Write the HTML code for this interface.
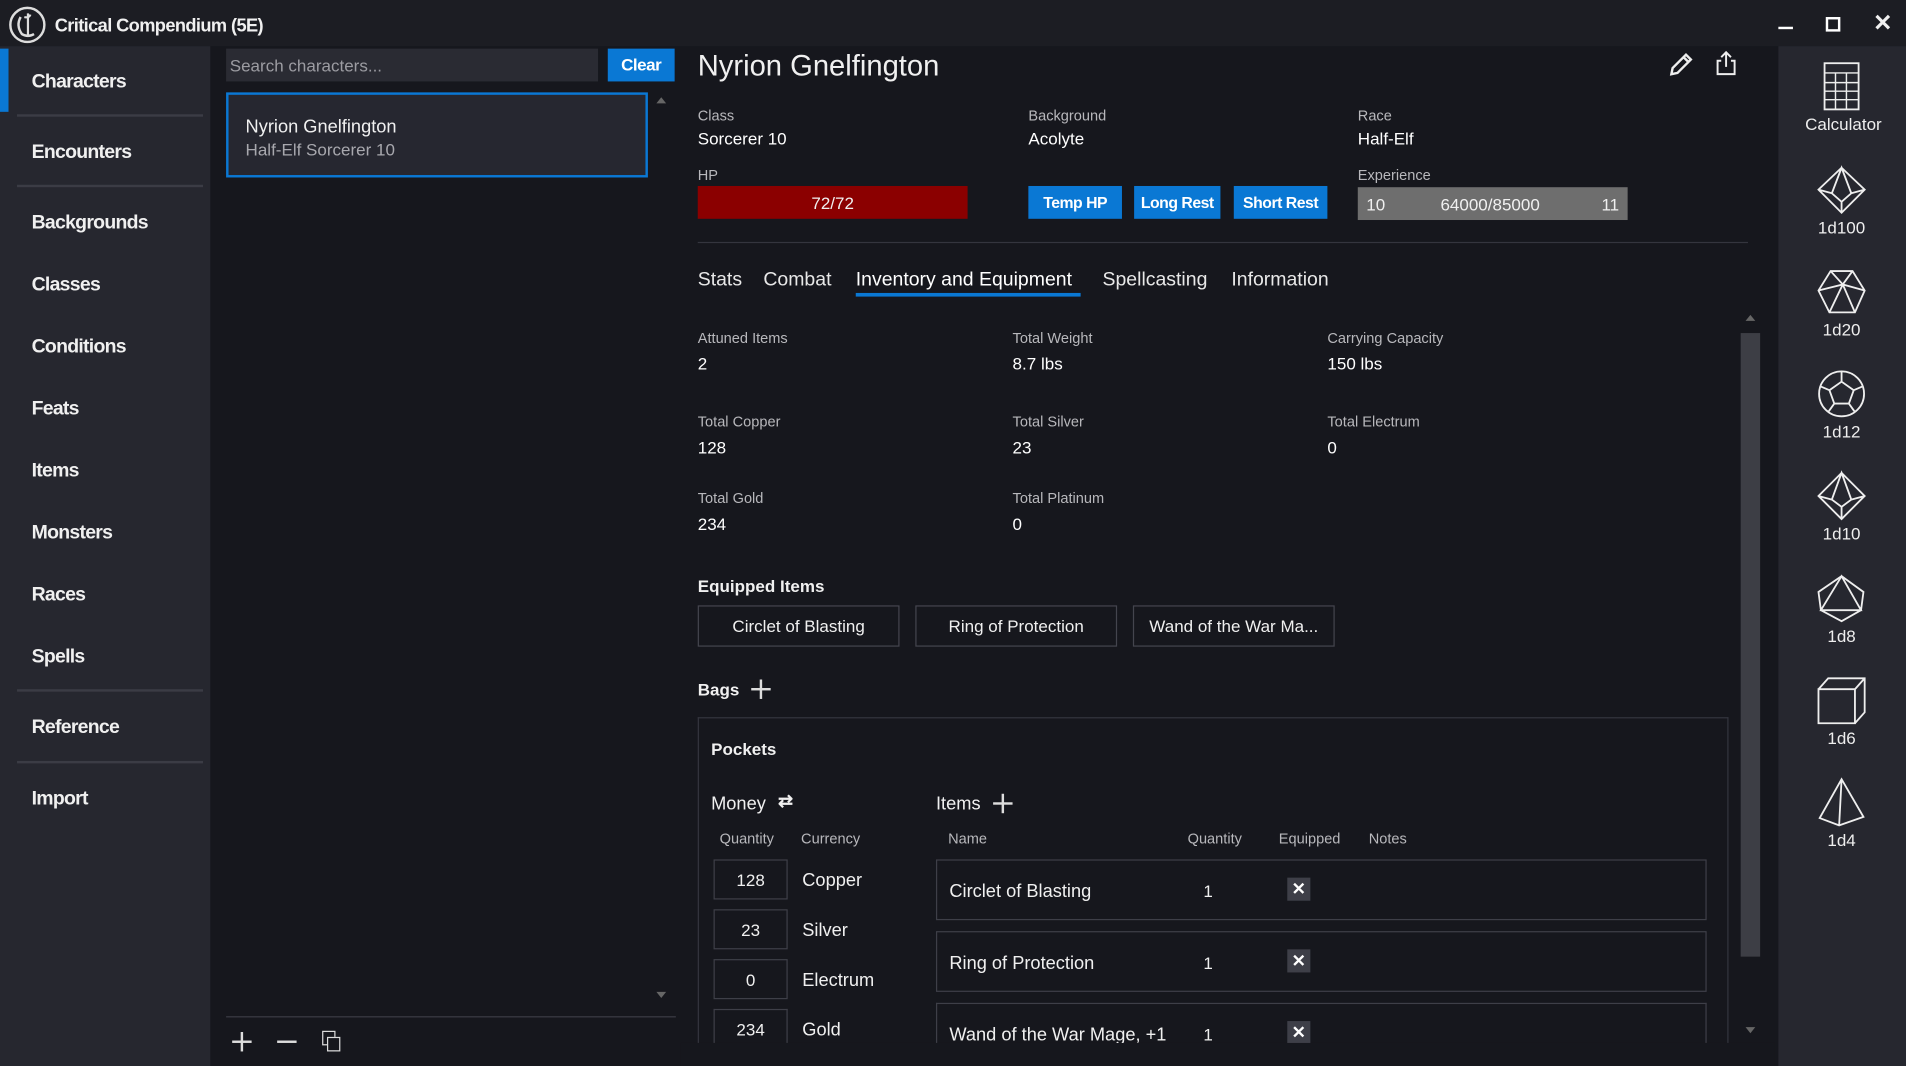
<!DOCTYPE html>
<html><head><meta charset="utf-8">
<style>
*{margin:0;padding:0;box-sizing:border-box}
html,body{width:1906px;height:1066px;overflow:hidden;background:#16171d}
#w{position:absolute;left:0;top:0;width:1568px;height:877px;transform:scale(1.21556);transform-origin:0 0;background:#16171d;font-family:"Liberation Sans",sans-serif;color:#f0f0f0;font-size:14px}
.a{position:absolute;white-space:nowrap}
.nav{left:26px;font-size:16px;font-weight:bold;letter-spacing:-0.6px;margin-top:1px}
.sep{position:absolute;left:14px;width:153px;height:2px;background:#3b3c45}
.lbl{font-size:12px;color:#b8b8bc}
.val{font-size:14px;color:#fff}
.btn{position:absolute;background:#0a78d4;color:#fff;font-weight:bold;font-size:13px;text-align:center;line-height:27px;height:27px;letter-spacing:-0.4px}
.tab{font-size:16px;color:#e8e8e8;top:222px}
.eq{position:absolute;top:498px;height:34px;border:1px solid #44454e;font-size:14px;text-align:center;line-height:33px;width:166px}
.qb{position:absolute;left:587px;width:61px;height:33px;border:1px solid #3e3f48;text-align:center;line-height:32px;font-size:14px}
.cur{left:660px;font-size:15px}
.row{position:absolute;left:770px;width:634px;height:50px;border:1px solid #3e3f48}
.row .n{position:absolute;left:10px;top:17px;font-size:15px}
.row .q{position:absolute;left:219px;top:17px;font-size:14px}
.row .x{position:absolute;left:288px;top:14px;width:19px;height:19px;background:#3e3f48;color:#fff;font-size:14px;font-weight:bold;text-align:center;line-height:19px}
.die{position:absolute;left:1485px;width:60px;text-align:center;font-size:14px;color:#eee}
.die svg{display:block;margin:0 auto 2px}
</style></head><body><div id="w">
<div class="a" style="left:0;top:0;width:1568px;height:38px;background:#1c1d23"></div>
<svg class="a" style="left:7px;top:5px" width="31" height="31" viewBox="0 0 31 31"><circle cx="15.5" cy="15.5" r="14" fill="none" stroke="#ddd" stroke-width="2"/><path d="M10 9 Q6 16 11 23 Q16 26 21 23" fill="none" stroke="#ddd" stroke-width="2"/><path d="M16 6 L16 24 M13 9 Q17 10 18 7" fill="none" stroke="#ddd" stroke-width="1.8"/></svg>
<div class="a" style="left:45px;top:13px;font-size:15px;font-weight:bold;letter-spacing:-0.5px">Critical Compendium (5E)</div>
<div class="a" style="left:1463px;top:22px;width:12px;height:2px;background:#fff"></div>
<div class="a" style="left:1502px;top:14px;width:12px;height:12px;border:2px solid #fff"></div>
<div class="a" style="left:1541px;top:8px;font-size:19px;font-weight:bold">✕</div>
<div class="a" style="left:0;top:38px;width:173px;height:839px;background:#26272f"></div>
<div class="a" style="left:0;top:40px;width:7px;height:52px;background:#0a78d4"></div>
<div class="a nav" style="top:58px">Characters</div>
<div class="sep" style="top:94px"></div>
<div class="a nav" style="top:116px">Encounters</div>
<div class="sep" style="top:152px"></div>
<div class="a nav" style="top:174px">Backgrounds</div>
<div class="a nav" style="top:225px">Classes</div>
<div class="a nav" style="top:276px">Conditions</div>
<div class="a nav" style="top:327px">Feats</div>
<div class="a nav" style="top:378px">Items</div>
<div class="a nav" style="top:429px">Monsters</div>
<div class="a nav" style="top:480px">Races</div>
<div class="a nav" style="top:531px">Spells</div>
<div class="sep" style="top:567px"></div>
<div class="a nav" style="top:589px">Reference</div>
<div class="sep" style="top:626px"></div>
<div class="a nav" style="top:648px">Import</div>
<div class="a" style="left:186px;top:40px;width:306px;height:27px;background:#2a2b33;color:#9c9ca2;font-size:14px;padding:6px 3px">Search characters...</div>
<div class="btn" style="left:500px;top:40px;width:55px;font-size:14px">Clear</div>
<div class="a" style="left:186px;top:76px;width:347px;height:70px;background:#262730;border:2px solid #0a78d4"></div>
<div class="a" style="left:202px;top:96px;font-size:15px">Nyrion Gnelfington</div>
<div class="a" style="left:202px;top:115px;font-size:14px;color:#a8a8ae">Half-Elf Sorcerer 10</div>
<div class="a" style="left:540px;top:80px;width:0;height:0;border-left:4px solid transparent;border-right:4px solid transparent;border-bottom:5px solid #666"></div>
<div class="a" style="left:540px;top:816px;width:0;height:0;border-left:4px solid transparent;border-right:4px solid transparent;border-top:5px solid #666"></div>
<div class="a" style="left:186px;top:836px;width:370px;height:1px;background:#3b3c45"></div>
<div class="a" style="left:191px;top:856px;width:16px;height:2px;background:#ddd"></div>
<div class="a" style="left:198px;top:849px;width:2px;height:16px;background:#ddd"></div>
<div class="a" style="left:228px;top:856px;width:16px;height:2px;background:#ddd"></div>
<div class="a" style="left:265px;top:848px;width:11px;height:12px;border:1.5px solid #ddd"></div>
<div class="a" style="left:269px;top:853px;width:11px;height:12px;border:1.5px solid #ddd;background:#16171d"></div>
<div class="a" style="left:574px;top:41px;font-size:24px;letter-spacing:0px">Nyrion Gnelfington</div>
<svg class="a" style="left:1372px;top:42px" width="22" height="22" viewBox="0 0 22 22"><path d="M3 19 L4 14 L15 3 L19 7 L8 18 Z M13 5 L17 9" fill="none" stroke="#eee" stroke-width="2"/></svg>
<svg class="a" style="left:1410px;top:41px" width="20" height="22" viewBox="0 0 20 22"><path d="M6 9 H3 V20 H17 V9 H14 M10 14 V2 M6 6 L10 2 L14 6" fill="none" stroke="#eee" stroke-width="1.6"/></svg>
<div class="a lbl" style="left:574px;top:88px">Class</div><div class="a val" style="left:574px;top:106px">Sorcerer 10</div>
<div class="a lbl" style="left:846px;top:88px">Background</div><div class="a val" style="left:846px;top:106px">Acolyte</div>
<div class="a lbl" style="left:1117px;top:88px">Race</div><div class="a val" style="left:1117px;top:106px">Half-Elf</div>
<div class="a lbl" style="left:574px;top:137px">HP</div>
<div class="a" style="left:574px;top:153px;width:222px;height:27px;background:#8b0000;text-align:center;line-height:29px;font-size:14px">72/72</div>
<div class="btn" style="left:846px;top:153px;width:77px">Temp HP</div>
<div class="btn" style="left:933px;top:153px;width:71px">Long Rest</div>
<div class="btn" style="left:1015px;top:153px;width:77px">Short Rest</div>
<div class="a lbl" style="left:1117px;top:137px">Experience</div>
<div class="a" style="left:1117px;top:154px;width:222px;height:27px;background:#6e6e6e;font-size:14px;line-height:28px">
<span style="position:absolute;left:7px">10</span><span style="position:absolute;left:68px">64000/85000</span><span style="position:absolute;right:7px">11</span></div>
<div class="a" style="left:574px;top:199px;width:864px;height:1px;background:#34353e"></div>
<div class="a tab" style="left:574px">Stats</div>
<div class="a tab" style="left:628px">Combat</div>
<div class="a tab" style="left:704px;color:#fff">Inventory and Equipment</div>
<div class="a" style="left:704px;top:241px;width:185px;height:3px;background:#0a78d4"></div>
<div class="a tab" style="left:907px">Spellcasting</div>
<div class="a tab" style="left:1013px">Information</div>
<div class="a" style="left:1432px;top:274px;width:16px;height:513px;background:#3d3e45"></div>
<div class="a" style="left:1436px;top:259px;width:0;height:0;border-left:4px solid transparent;border-right:4px solid transparent;border-bottom:5px solid #666"></div>
<div class="a" style="left:1436px;top:845px;width:0;height:0;border-left:4px solid transparent;border-right:4px solid transparent;border-top:5px solid #666"></div>
<div class="a lbl" style="left:574px;top:271px">Attuned Items</div><div class="a val" style="left:574px;top:291px">2</div>
<div class="a lbl" style="left:833px;top:271px">Total Weight</div><div class="a val" style="left:833px;top:291px">8.7 lbs</div>
<div class="a lbl" style="left:1092px;top:271px">Carrying Capacity</div><div class="a val" style="left:1092px;top:291px">150 lbs</div>
<div class="a lbl" style="left:574px;top:340px">Total Copper</div><div class="a val" style="left:574px;top:360px">128</div>
<div class="a lbl" style="left:833px;top:340px">Total Silver</div><div class="a val" style="left:833px;top:360px">23</div>
<div class="a lbl" style="left:1092px;top:340px">Total Electrum</div><div class="a val" style="left:1092px;top:360px">0</div>
<div class="a lbl" style="left:574px;top:403px">Total Gold</div><div class="a val" style="left:574px;top:423px">234</div>
<div class="a lbl" style="left:833px;top:403px">Total Platinum</div><div class="a val" style="left:833px;top:423px">0</div>
<div class="a" style="left:574px;top:474px;font-size:14px;font-weight:bold">Equipped Items</div>
<div class="eq" style="left:574px">Circlet of Blasting</div>
<div class="eq" style="left:753px">Ring of Protection</div>
<div class="eq" style="left:932px">Wand of the War Ma...</div>
<div class="a" style="left:574px;top:559px;font-size:14px;font-weight:bold">Bags</div>
<div class="a" style="left:618px;top:566px;width:16px;height:1.5px;background:#ddd"></div>
<div class="a" style="left:625px;top:559px;width:1.5px;height:16px;background:#ddd"></div>
<div class="a" style="left:574px;top:590px;width:848px;height:268px;border:1px solid #34353e;border-bottom:none"></div>
<div class="a" style="left:585px;top:608px;font-size:14px;font-weight:bold">Pockets</div>
<div class="a" style="left:585px;top:653px;font-size:15px">Money</div>
<div class="a" style="left:640px;top:650px;font-size:15px;font-weight:bold">⇄</div>
<div class="a lbl" style="left:592px;top:683px">Quantity</div>
<div class="a lbl" style="left:659px;top:683px">Currency</div>
<div class="qb" style="top:707px">128</div><div class="a cur" style="top:716px">Copper</div>
<div class="qb" style="top:748px">23</div><div class="a cur" style="top:757px">Silver</div>
<div class="qb" style="top:789px">0</div><div class="a cur" style="top:798px">Electrum</div>
<div class="qb" style="top:830px;height:28px;border-bottom:none">234</div><div class="a cur" style="top:839px">Gold</div>
<div class="a" style="left:770px;top:653px;font-size:15px">Items</div>
<div class="a" style="left:817px;top:660px;width:16px;height:1.5px;background:#ddd"></div>
<div class="a" style="left:824px;top:653px;width:1.5px;height:16px;background:#ddd"></div>
<div class="a lbl" style="left:780px;top:683px">Name</div>
<div class="a lbl" style="left:977px;top:683px">Quantity</div>
<div class="a lbl" style="left:1052px;top:683px">Equipped</div>
<div class="a lbl" style="left:1126px;top:683px">Notes</div>
<div class="row" style="top:707px"><span class="n">Circlet of Blasting</span><span class="q">1</span><span class="x">✕</span></div>
<div class="row" style="top:766px"><span class="n">Ring of Protection</span><span class="q">1</span><span class="x">✕</span></div>
<div class="row" style="top:825px;height:33px;border-bottom:none"><span class="n">Wand of the War Mage, +1</span><span class="q">1</span><span class="x">✕</span></div>
<div class="a" style="left:560px;top:858px;width:900px;height:19px;background:#16171d"></div>
<div class="a" style="left:1463px;top:38px;width:105px;height:839px;background:#26272f"></div>
<div class="die" style="top:50px"><svg width="30" height="42" viewBox="0 0 30 42"><rect x="1" y="2" width="28" height="38" fill="none" stroke="#eee" stroke-width="1.5"/><path d="M1 10 H29 M1 18 H29 M1 25 H29 M1 32 H29 M10 10 V40 M19 10 V40" stroke="#eee" stroke-width="1.2"/></svg><span style="font-size:14px">Calculator</span></div>
<div class="die" style="top:135px"><svg width="42" height="42" viewBox="0 0 42 42"><path d="M21 3 L40 21 L21 40 L2 21 Z M21 3 L13 24 L21 31 L29 24 Z M2 21 L13 24 M40 21 L29 24 M21 31 V40" fill="none" stroke="#eee" stroke-width="1.5"/></svg>1d100</div>
<div class="die" style="top:219px"><svg width="42" height="42" viewBox="0 0 42 42"><path d="M12 4 L30 4 L40 20 L32 38 L11 38 L2 20 Z M12 4 L22 15 L30 4 M2 20 L22 15 L40 20 M22 15 L32 38 M22 15 L11 38 M2 20 L11 38" fill="none" stroke="#eee" stroke-width="1.5"/></svg>1d20</div>
<div class="die" style="top:303px"><svg width="42" height="42" viewBox="0 0 42 42"><circle cx="21" cy="21" r="18.5" fill="none" stroke="#eee" stroke-width="1.5"/><path d="M21 11 L31 18 L27 29 L15 29 L11 18 Z M21 11 V3 M31 18 L38 15 M27 29 L32 36 M15 29 L10 36 M11 18 L4 15" fill="none" stroke="#eee" stroke-width="1.5"/></svg>1d12</div>
<div class="die" style="top:387px"><svg width="42" height="42" viewBox="0 0 42 42"><path d="M21 2 L40 21 L21 40 L2 21 Z M21 2 L13 24 L21 30 L29 24 Z M2 21 L13 24 M40 21 L29 24 M21 30 V40" fill="none" stroke="#eee" stroke-width="1.5"/></svg>1d10</div>
<div class="die" style="top:471px"><svg width="42" height="42" viewBox="0 0 42 42"><path d="M21 3 L39 16 L37 31 L21 40 L4 31 L2 16 Z M21 3 L4 31 L37 31 Z" fill="none" stroke="#eee" stroke-width="1.5"/></svg>1d8</div>
<div class="die" style="top:555px"><svg width="42" height="42" viewBox="0 0 42 42"><path d="M2 12 H32 V40 H2 Z M2 12 L10 3 H40 V31 L32 40 M32 12 L40 3" fill="none" stroke="#eee" stroke-width="1.5"/></svg>1d6</div>
<div class="die" style="top:639px"><svg width="42" height="42" viewBox="0 0 42 42"><path d="M21 2 L3 34 L19 40 L39 33 Z M21 2 L19 40" fill="none" stroke="#eee" stroke-width="1.5"/></svg>1d4</div>
</div></body></html>
